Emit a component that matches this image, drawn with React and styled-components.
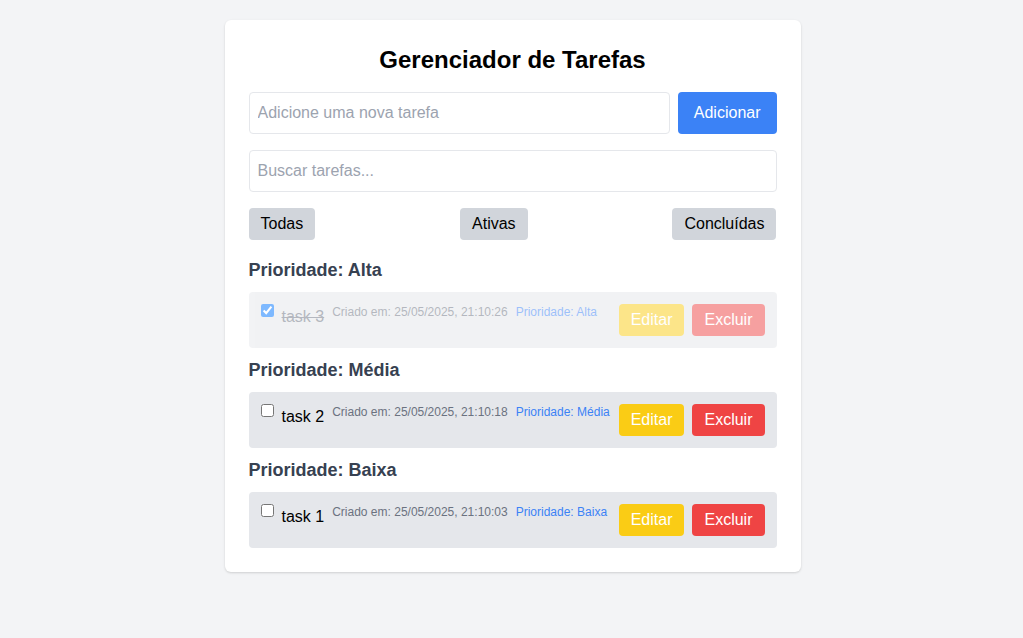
import styled, { createGlobalStyle } from "styled-components";

const GlobalStyle = createGlobalStyle`
  *, *::before, *::after { box-sizing: border-box; margin: 0; }
  body {
    background: #f3f4f6;
    font-family: "Liberation Sans", Arial, sans-serif;
    color: #000;
  }
`;

const Page = styled.div`
  display: flex;
  justify-content: center;
  align-items: flex-start;
  padding: 20px 0 0 2px;
  min-height: 100vh;
`;

const Card = styled.div`
  width: 576px;
  background: #fff;
  border-radius: 6px;
  box-shadow: 0 1px 3px rgba(0, 0, 0, 0.1), 0 1px 2px rgba(0, 0, 0, 0.06);
  padding: 24px;
`;

const Title = styled.h1`
  font-size: 24px;
  line-height: 32px;
  font-weight: 700;
  text-align: center;
  margin-bottom: 16px;
`;

const AddRow = styled.div`
  display: flex;
  gap: 8px;
  margin-bottom: 16px;
`;

const Input = styled.input`
  flex: 1;
  width: 100%;
  font: inherit;
  font-size: 16px;
  line-height: 24px;
  padding: 8px;
  border: 1px solid #e5e7eb;
  border-radius: 4px;
  outline: none;
  &::placeholder { color: #9ca3af; }
`;

const SearchWrap = styled.div`
  margin-bottom: 16px;
  display: flex;
`;

const PrimaryButton = styled.button`
  font: inherit;
  font-size: 16px;
  line-height: 24px;
  padding: 8px 16px;
  background: #3b82f6;
  color: #fff;
  border: none;
  border-radius: 4px;
`;

const Filters = styled.div`
  display: flex;
  justify-content: space-between;
  margin-bottom: 16px;
`;

const FilterButton = styled.button`
  font: inherit;
  font-size: 16px;
  line-height: 24px;
  padding: 4px 12px;
  background: #d1d5db;
  color: #000;
  border: none;
  border-radius: 4px;
`;

const Section = styled.section`
  margin-bottom: 8px;
  &:last-child { margin-bottom: 0; }
`;

const SectionTitle = styled.h2`
  font-size: 18px;
  line-height: 28px;
  font-weight: 600;
  color: #374151;
  margin-bottom: 8px;
`;

const Item = styled.div`
  display: flex;
  justify-content: space-between;
  align-items: flex-start;
  padding: 12px;
  background: #e5e7eb;
  border-radius: 4px;
  opacity: ${(p) => (p.$done ? 0.5 : 1)};
`;

const Left = styled.div`
  display: flex;
  align-items: flex-start;
  white-space: nowrap;
`;

const Check = styled.input`
  margin: 0 8px 0 0;
  width: 13px;
  height: 13px;
`;

const TaskText = styled.span`
  font-size: 16px;
  line-height: 26px;
  color: ${(p) => (p.$done ? "#6b7280" : "#000")};
  text-decoration: ${(p) => (p.$done ? "line-through" : "none")};
`;

const Meta = styled.span`
  font-size: 12px;
  line-height: 17px;
  margin-left: 8px;
  color: ${(p) => (p.$blue ? "#3b82f6" : "#6b7280")};
`;

const Actions = styled.div`
  display: flex;
  gap: 8px;
`;

const ActionButton = styled.button`
  font: inherit;
  font-size: 16px;
  line-height: 24px;
  padding: 4px 12px;
  color: #fff;
  border: none;
  border-radius: 4px;
  background: ${(p) => (p.$danger ? "#ef4444" : "#facc15")};
`;

const groups = [
  { label: "Alta", tasks: [{ name: "task 3", date: "25/05/2025, 21:10:26", done: true }] },
  { label: "Média", tasks: [{ name: "task 2", date: "25/05/2025, 21:10:18", done: false }] },
  { label: "Baixa", tasks: [{ name: "task 1", date: "25/05/2025, 21:10:03", done: false }] },
];

export default function App() {
  return (
    <>
      <GlobalStyle />
      <Page>
        <Card>
          <Title>Gerenciador de Tarefas</Title>
          <AddRow>
            <Input placeholder="Adicione uma nova tarefa" />
            <PrimaryButton>Adicionar</PrimaryButton>
          </AddRow>
          <SearchWrap>
            <Input placeholder="Buscar tarefas..." />
          </SearchWrap>
          <Filters>
            <FilterButton>Todas</FilterButton>
            <FilterButton>Ativas</FilterButton>
            <FilterButton>Concluídas</FilterButton>
          </Filters>
          {groups.map((g) => (
            <Section key={g.label}>
              <SectionTitle>Prioridade: {g.label}</SectionTitle>
              {g.tasks.map((t) => (
                <Item key={t.name} $done={t.done}>
                  <Left>
                    <Check type="checkbox" defaultChecked={t.done} />
                    <TaskText $done={t.done}>{t.name}</TaskText>
                    <Meta>Criado em: {t.date}</Meta>
                    <Meta $blue>Prioridade: {g.label}</Meta>
                  </Left>
                  <Actions>
                    <ActionButton>Editar</ActionButton>
                    <ActionButton $danger>Excluir</ActionButton>
                  </Actions>
                </Item>
              ))}
            </Section>
          ))}
        </Card>
      </Page>
    </>
  );
}
